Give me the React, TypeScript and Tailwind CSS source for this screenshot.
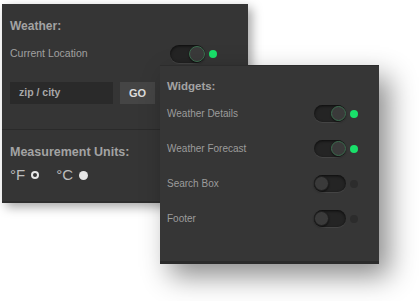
import React from 'react'

function Toggle({ on, small }: { on: boolean; small?: boolean }) {
  const track = small ? 'w-[32px] h-[17px]' : 'w-[35px] h-[18px]'
  const knob = small ? 'w-[15px] h-[15px]' : 'w-[16px] h-[16px]'
  return (
    <div className="flex items-center gap-[4px]">
      <div
        className={`${track} rounded-full bg-[#242424] shadow-[inset_0_1px_3px_rgba(0,0,0,0.7),0_1px_0_rgba(255,255,255,0.07)] flex items-center ${on ? 'justify-end' : 'justify-start'}`}
      >
        <div
          className={`${knob} rounded-full bg-[#3a3a3a] border ${on ? 'border-[#3d6e50]' : 'border-[#1f1f1f]'} shadow-[0_1px_2px_rgba(0,0,0,0.6)]`}
        />
      </div>
      <div className={`w-[8px] h-[8px] rounded-full ${on ? 'bg-[#19e06a]' : 'bg-[#2c2c2c]'}`} />
    </div>
  )
}

function WidgetRow({ label, on }: { label: string; on: boolean }) {
  return (
    <div className="h-[35px] flex items-center">
      <span className="w-[147px] text-[10px] text-[#9c9c9c]">{label}</span>
      <Toggle on={on} small />
    </div>
  )
}

export default function App() {
  return (
    <div
      className="relative w-[419px] h-[301px] bg-white overflow-hidden"
      style={{ fontFamily: '"Liberation Sans", Arial, sans-serif' }}
    >
      {/* weather settings */}
      <div className="ml-[2px] mt-[4px] w-[246px] h-[199px] bg-[#353535] border-b-[2px] border-[#2d2d2d] shadow-[4px_4px_10px_rgba(0,0,0,0.35)]">
        <div className="h-[40px] flex items-center pt-[3px] pl-[8px] text-[12px] font-bold text-[#a3a3a3]">Weather:</div>
        <div className="h-[20px] flex items-center pl-[8px]">
          <span className="w-[160px] text-[10.5px] text-[#a0a0a0]">Current Location</span>
          <Toggle on />
        </div>
        <div className="mt-[18px] flex items-center gap-[7px] pl-[8px]">
          <div className="w-[103px] h-[22px] bg-[#2a2a2a] flex items-center pl-[9px] text-[10.5px] font-bold text-[#a8a8a8]">
            zip / city
          </div>
          <div className="w-[35px] h-[22px] bg-[#454545] flex items-center justify-center text-[11px] font-bold text-[#dcdcdc]">
            GO
          </div>
        </div>
        <div className="mt-[25px] border-t border-[#2a2a2a]" />
        <div className="mt-[14px] pl-[8px] text-[12.5px] font-bold text-[#a3a3a3] leading-[16px]">Measurement Units:</div>
        <div className="mt-[6px] pl-[8px] flex items-center text-[15px] text-[#bdbdbd] leading-[18px]">
          <span>°F</span>
          <div className="ml-[6px] w-[8px] h-[8px] rounded-full bg-[#e6e6e6] flex items-center justify-center">
            <div className="w-[4px] h-[4px] rounded-full bg-[#353535]" />
          </div>
          <span className="ml-[17px]">°C</span>
          <div className="ml-[6px] w-[9px] h-[9px] rounded-full bg-[#e6e6e6]" />
        </div>
      </div>

      {/* widgets panel overlapping */}
      <div className="absolute left-[160px] top-[65px] w-[219px] h-[199px] bg-[#363636] border-t border-[#2c2c2c] border-b-[3px] border-b-[#2b2b2b] shadow-[10px_12px_26px_rgba(0,0,0,0.45)] pl-[7px]">
        <div className="h-[42px] flex items-center text-[11.5px] font-bold text-[#a3a3a3]">Widgets:</div>
        <div className="-mt-[12px]">
          <WidgetRow label="Weather Details" on />
          <WidgetRow label="Weather Forecast" on />
          <WidgetRow label="Search Box" on={false} />
          <WidgetRow label="Footer" on={false} />
        </div>
      </div>
    </div>
  )
}
